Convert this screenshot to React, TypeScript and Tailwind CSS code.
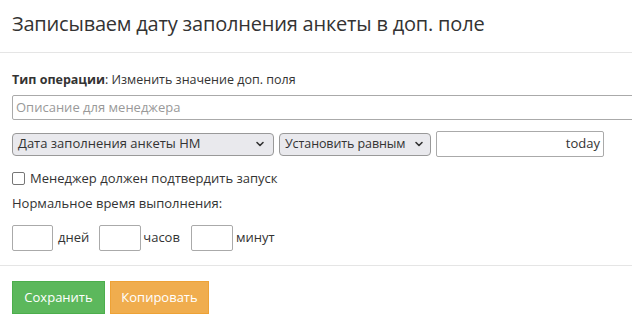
import React from 'react';

const font = { fontFamily: '"Open Sans", "Noto Sans", sans-serif' };

const ChevronDown: React.FC = () => (
    <svg width="10" height="10" viewBox="0 0 10 10" className="shrink-0">
        <path d="M2 3.5 L5 6.5 L8 3.5" fill="none" stroke="#333" strokeWidth="1.6" strokeLinecap="round" strokeLinejoin="round" />
    </svg>
);

const App: React.FC = () => {
    return (
        <div className="w-[632px] h-[319px] overflow-hidden bg-white text-[#333]" style={font}>
            {/* header */}
            <div className="h-[53px] border-b border-[#e5e5e5] px-3 pb-[4px] flex items-center">
                <h1 className="text-[20px] font-normal tracking-[-0.2px] leading-none">Записываем дату заполнения анкеты в доп. поле</h1>
            </div>

            {/* body */}
            <div className="px-3 pt-[19px] h-[213px] border-b border-[#e5e5e5] text-[13px]">
                <div className="text-[12.5px] leading-[16px]">
                    <span className="font-bold">Тип операции</span>: Изменить значение доп. поля
                </div>
                <div className="mt-[7px] w-[640px] h-[25px] border border-[#aaa] rounded-[2px] flex items-center px-[3px] text-[#999]">
                    Описание для менеджера
                </div>

                <div className="mt-[11px] flex items-center">
                    <div className="w-[262px] h-[23px] border border-[#999] rounded-[4px] bg-[#e9e9ed] flex items-center justify-between pl-[5px] pr-[8px]">
                        <span>Дата заполнения анкеты НМ</span>
                        <ChevronDown />
                    </div>
                    <div className="ml-[5px] w-[152px] h-[23px] border border-[#999] rounded-[4px] bg-[#e9e9ed] flex items-center justify-between pl-[5px] pr-[6px] text-[12.5px] tracking-[-0.1px]">
                        <span>Установить равным</span>
                        <ChevronDown />
                    </div>
                    <div className="ml-[5px] w-[168px] h-[26px] border border-[#aaa] rounded-[2px] flex items-center justify-end pr-[3px]">
                        today
                    </div>
                </div>

                <label className="mt-[13px] flex items-center leading-[16px]">
                    <span className="w-[13px] h-[13px] border border-[#767676] rounded-[2px] bg-white mr-[5px]" />
                    Менеджер должен подтвердить запуск
                </label>

                <div className="mt-[9px] leading-[16px]">Нормальное время выполнения:</div>

                <div className="mt-[14px] flex items-center">
                    <div className="w-[41px] h-[26px] border border-[#aaa] rounded-[2px]" />
                    <span className="ml-[5px]">дней</span>
                    <div className="ml-[10px] w-[42px] h-[26px] border border-[#aaa] rounded-[2px]" />
                    <span className="ml-[2px]">часов</span>
                    <div className="ml-[11px] w-[42px] h-[26px] border border-[#aaa] rounded-[2px]" />
                    <span className="ml-[3px]">минут</span>
                </div>
            </div>

            {/* footer */}
            <div className="px-3 pt-[15px] flex gap-[5px]">
                <button className="w-[93px] h-[33px] bg-[#5cb85c] border border-[#4cae4c] text-white text-[13px]">Сохранить</button>
                <button className="w-[99px] h-[33px] bg-[#f0ad4e] border border-[#eea236] text-white text-[13px]">Копировать</button>
            </div>
        </div>
    );
};

export default App;
